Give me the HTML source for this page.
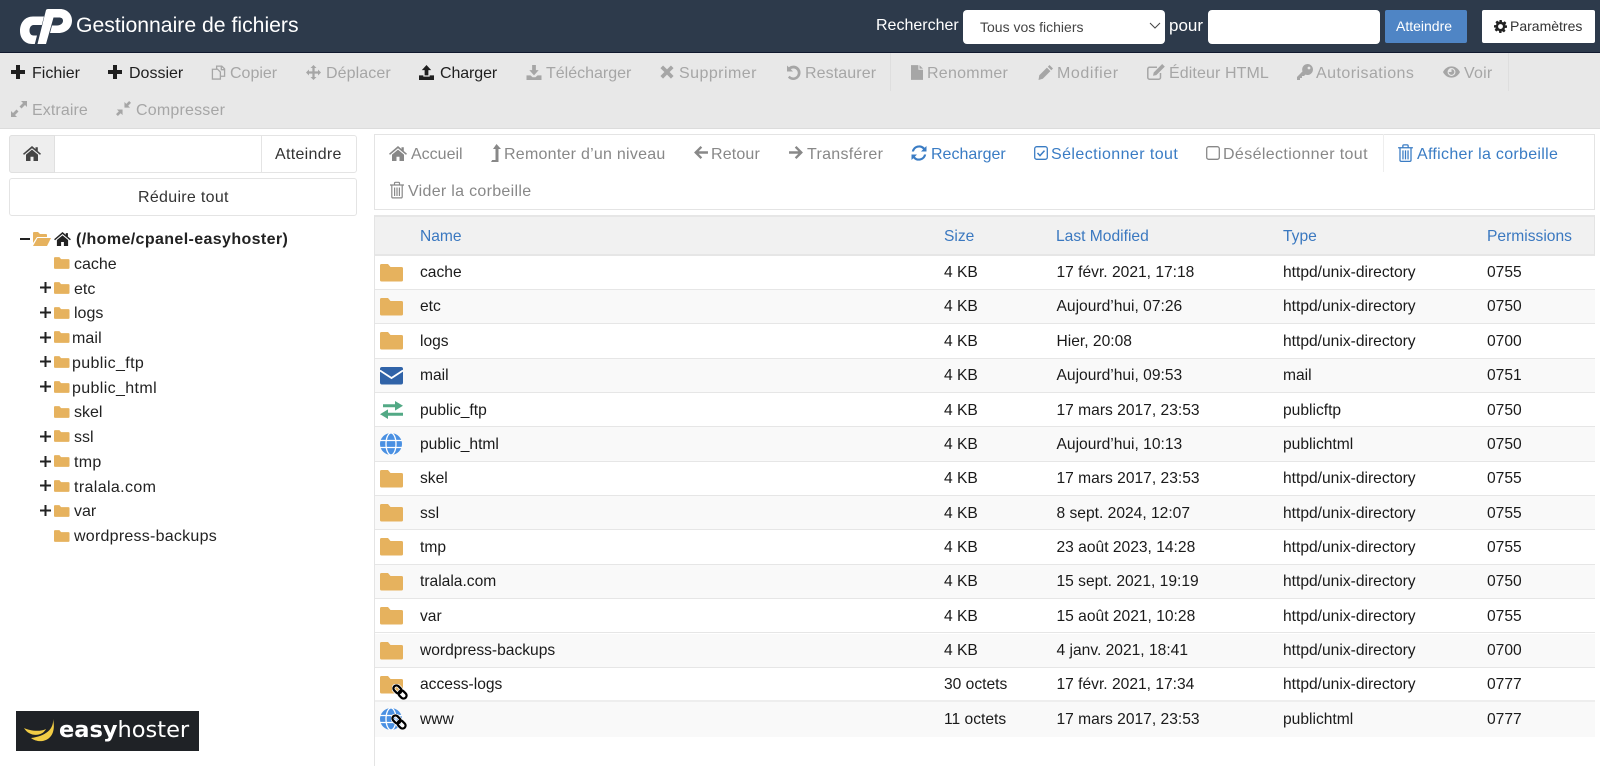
<!DOCTYPE html>
<html lang="fr"><head><meta charset="utf-8"><title>Gestionnaire de fichiers</title>
<style>
html,body{margin:0;padding:0;width:1600px;height:766px;overflow:hidden;background:#fff;font-family:"Liberation Sans",Arial,sans-serif}
.a,.t,.i{position:absolute}
.t{white-space:nowrap;line-height:20px;font-size:16px}
.i{overflow:visible}
.d{color:#a6a6a6}.k{color:#1f1f1f}.g{color:#888}.b{color:#3a7cc4}
.tr{color:#222;font-size:16px}
.f{color:#e6b25e}
.r{position:absolute;left:375px;width:1220px;height:34.4px;box-sizing:border-box;border-bottom:1px solid #e6e6e6;font-size:15.6px;color:#1a1a1a}
.r.e{background:#f9f9f9}
.r span{position:absolute;top:7.6px;line-height:20px;white-space:nowrap}
.r svg{position:absolute;overflow:visible}
.n{left:45px}.s{left:569px}.m{left:681.500px}.y{left:908px}.p{left:1112px}
.h{position:absolute;top:227px;line-height:20px;font-size:15.6px;color:#3a78c0}
</style></head><body>
<svg width="0" height="0" style="position:absolute">
<defs>
<symbol id="plus" viewBox="0 0 16 16"><path d="M6 1h4v5h5v4h-5v5H6v-5H1V6h5z"/></symbol>
<symbol id="copy" viewBox="0 0 16 16"><path fill="none" stroke="currentColor" stroke-width="1.4" d="M6 4V1.200h5.500l3 3V12H10.500M1.500 4.500h5.500l3 3V15H1.500zM11 1.500V5h3.500"/></symbol>
<symbol id="move" viewBox="0 0 16 16"><path d="M8 0l3.200 3.200h-2V6.800h3.600v-2L16 8l-3.200 3.200v-2H9.200v3.600h2L8 16l-3.200-3.200h2V9.200H3.200v2L0 8l3.200-3.200v2h3.600V3.200h-2z"/></symbol>
<symbol id="up" viewBox="0 0 16 16"><path d="M8 0l5 5.500H10V11H6V5.500H3zM0 11h4.600v1.400h6.800V11H16v5H0z"/></symbol>
<symbol id="down" viewBox="0 0 16 16"><path d="M6 0h4v5.500h3L8 11 3 5.500h3zM0 11h4.200L6.500 13h3L11.800 11H16v5H0z"/></symbol>
<symbol id="x" viewBox="0 0 16 16"><path d="M3.500.5L8 5l4.500-4.500 3 3L11 8l4.500 4.500-3 3L8 11l-4.500 4.500-3-3L5 8 .5 3.500z"/></symbol>
<symbol id="undo" viewBox="0 0 16 16"><path d="M2 1.500V7.500H8L5.800 5.200A4.500 4.500 0 1 1 4.700 11.700L2.900 13.500A7.200 7.200 0 1 0 3.800 3.200z"/></symbol>
<symbol id="file" viewBox="0 0 13 16"><path d="M0 0h8v5h5v11H0zM9.200 0L13 3.800H9.200z"/></symbol>
<symbol id="pencil" viewBox="0 0 16 16"><path d="M11.500 1l3.500 3.500-1.700 1.700-3.500-3.500zM8.900 3.600l3.500 3.500-7.600 7.600L0.500 16 1.300 11.200z"/></symbol>
<symbol id="edit" viewBox="0 0 18 16"><path fill="none" stroke="currentColor" stroke-width="1.500" d="M13.500 9v4.500a1.700 1.700 0 0 1-1.700 1.700H2.500a1.700 1.700 0 0 1-1.700-1.700V5a1.700 1.700 0 0 1 1.700-1.700H10"/><path d="M15.200 0l2.600 2.600-8.500 8.500-3.300.7.700-3.300z"/></symbol>
<symbol id="key" viewBox="0 0 16 16"><path d="M10.500 0A5.500 5.500 0 1 1 8.400 10.600L7 12H5v2H3v2H0v-3l5.500-5.600A5.500 5.500 0 0 1 10.500 0zm1.500 2.600a1.400 1.400 0 1 0 0 2.800 1.400 1.400 0 0 0 0-2.800z"/></symbol>
<symbol id="eye" viewBox="0 0 18 12"><path fill-rule="evenodd" d="M9 0c4 0 7.300 2.500 9 6-1.700 3.500-5 6-9 6S1.700 9.500 0 6c1.700-3.500 5-6 9-6zM9 1.800A4.200 4.200 0 1 0 9 10.200 4.200 4.200 0 0 0 9 1.800zM9 3a3 3 0 1 1-3 3h3z"/></symbol>
<symbol id="expand" viewBox="0 0 16 16"><path d="M10 0h6v6l-2-2-3.500 3.500-2-2L12 2zM6 16H0v-6l2 2 3.500-3.500 2 2L4 14z"/></symbol>
<symbol id="compress" viewBox="0 0 16 16"><path d="M9 7V1l2 2 3-3 2 2-3 3 2 2zM7 9v6l-2-2-3 3-2-2 3-3-2-2z"/></symbol>
<symbol id="home" viewBox="0 0 18 15"><path d="M9 0l3.500 3V1.200h2.300V5L18 7.800l-1 1.100L9 2.200 1 8.900 0 7.800zM9 3.600l6 5V15h-4.500v-4.300h-3V15H3V8.600z"/></symbol>
<symbol id="lvl" viewBox="0 0 10 18"><path d="M5.500 0L10 5H7.500v13H0l1.200-2h3.300V5H2z"/></symbol>
<symbol id="al" viewBox="0 0 15 14"><path d="M7 0l1.800 1.800L5 5.700h10v2.600H5l3.800 3.900L7 14 0 7z"/></symbol>
<symbol id="ar" viewBox="0 0 15 14"><path d="M8 0L6.200 1.800 10 5.700H0v2.600h10l-3.800 3.900L8 14l7-7z"/></symbol>
<symbol id="ref" viewBox="0 0 16 16"><path d="M15.500 1v5.500H10l2.100-2.100A5.200 5.200 0 0 0 3 6.500H.8A7.500 7.500 0 0 1 13.700 2.800zM.5 15V9.500H6L3.900 11.600A5.200 5.200 0 0 0 13 9.500h2.200A7.500 7.500 0 0 1 2.300 13.200z"/></symbol>
<symbol id="chk" viewBox="0 0 14 14"><rect x=".7" y=".7" width="12.600" height="12.600" rx="2" fill="none" stroke="currentColor" stroke-width="1.300"/><path fill="none" stroke="currentColor" stroke-width="1.500" d="M3.500 7l2.500 2.600 4.500-5"/></symbol>
<symbol id="sq" viewBox="0 0 14 14"><rect x=".7" y=".7" width="12.600" height="12.600" rx="2" fill="none" stroke="currentColor" stroke-width="1.300"/></symbol>
<symbol id="tr" viewBox="0 0 14 17"><path fill="none" stroke="currentColor" stroke-width="1.200" d="M0 3.500h14M4.500 3.500V1.800q0-1 1-1h3q1 0 1 1v1.700M1.800 3.500v11.700q0 1.200 1.200 1.200h8q1.200 0 1.200-1.200V3.500M4.600 6v8.500M7 6v8.500M9.400 6v8.500"/></symbol>
<symbol id="gear" viewBox="0 0 16 16"><path fill-rule="evenodd" d="M6.500 0h3l.4 2.300 1.300.6 2-1.300 2 2-1.300 2 .6 1.300L16 6.500v3l-2.500.4-.6 1.300 1.300 2-2 2-2-1.300-1.300.6L9.500 16h-3l-.4-2.500-1.300-.6-2 1.300-2-2 1.300-2-.6-1.300L0 9.500v-3l2.500-.4.600-1.300-1.300-2 2-2 2 1.300 1.300-.6zM8 5a3 3 0 1 0 0 6 3 3 0 0 0 0-6z"/></symbol>
<symbol id="fold" viewBox="0 0 23 17.500"><path d="M1.500 0H8l2.500 3H21.500Q23 3 23 4.500V16Q23 17.500 21.500 17.500H1.500Q0 17.500 0 16V1.500Q0 0 1.500 0Z"/></symbol>
<symbol id="mail" viewBox="0 0 23 17.500"><rect width="23" height="17.500" rx="2" fill="#3063a8"/><path d="M0 3.500L11.500 11 23 3.500" fill="none" stroke="#fff" stroke-width="1.800"/></symbol>
<symbol id="ftp" viewBox="0 0 23 18"><path fill="#52a985" d="M15 0l8 4.800-8 4.800V6.300H3V3.300H15zM8 8.400v3.300h15v3H8V18L0 13.200z"/></symbol>
<symbol id="globe" viewBox="0 0 22 22"><circle cx="11" cy="11" r="11" fill="#4a90e2"/><g fill="none" stroke="#fff" stroke-width="1.300"><path d="M0 7.500h22M0 14.500h22"/><ellipse cx="11" cy="11" rx="5" ry="11"/></g></symbol>
<symbol id="link" viewBox="0 0 16 16"><g fill="none" transform="rotate(45 8 8)"><rect x="0" y="5" width="8.800" height="6" rx="3" stroke="#fff" stroke-width="3.800"/><rect x="7.200" y="5" width="8.800" height="6" rx="3" stroke="#fff" stroke-width="3.800"/><rect x="0" y="5" width="8.800" height="6" rx="3" stroke="#000" stroke-width="2.300"/><rect x="7.200" y="5" width="8.800" height="6" rx="3" stroke="#000" stroke-width="2.300"/></g></symbol>
</defs></svg>

<!-- header -->
<div class="a" style="left:0;top:0;width:1600px;height:53px;background:#2d3a4b;border-bottom:1px solid #10182e;box-sizing:border-box"></div>
<svg class="i" style="left:0;top:0" width="80" height="52" viewBox="0 0 80 52"><g fill="#fff">
<path d="M20 31C20 22.500 25 16.500 33 16.500H44L41.800 25H33.500C31 25 29.500 27.500 29.500 30.500S31 35.500 33.500 35.500H37L34.800 44H32C25 44 20 38.500 20 31Z"/>
<path d="M37.500 44L46 10Q46.500 9 48 9H60C67 9 72 14 72 20.500C72 28 66 33 58.500 33H50L52 25.500H57C60.500 25.500 63 23.500 63 20.800C63 18.500 61.500 17.500 59 17.500H53.500L46 44Z"/>
</g></svg>
<span class="t" style="left:76px;top:16px;color:#fff;font-size:21.200px">Gestionnaire de fichiers</span>
<span class="t" style="left:876px;top:16px;color:#fff;font-size:16px">Rechercher</span>
<div class="a" style="left:963px;top:10px;width:202px;height:34px;background:#fff;border-radius:4px"></div>
<span class="t" style="left:980px;top:17px;color:#444;font-size:14px">Tous vos fichiers</span>
<svg class="i" style="left:1149px;top:22px" width="12" height="7" viewBox="0 0 12 7"><path d="M1 1l5 5 5-5" fill="none" stroke="#444" stroke-width="1"/></svg>
<span class="t" style="left:1169px;top:16px;color:#fff;font-size:17px">pour</span>
<div class="a" style="left:1208px;top:10px;width:172px;height:34px;background:#fff;border-radius:4px"></div>
<div class="a" style="left:1385px;top:10px;width:82px;height:33px;background:#4f85c5;border-radius:2px"></div>
<span class="t" style="left:1396px;top:16px;color:#fff;font-size:14px">Atteindre</span>
<div class="a" style="left:1482px;top:10px;width:113px;height:33px;background:#fff;border-radius:2px"></div>
<svg class="i k" style="left:1494px;top:20px;width:13px;height:13px;fill:#222"><use href="#gear"/></svg>
<span class="t" style="left:1510px;top:16px;color:#333;font-size:14px">Paramètres</span>

<!-- toolbar -->
<div class="a" style="left:0;top:53px;width:1600px;height:76px;background:#e8e8e8;border-bottom:1px solid #dcdcdc;box-sizing:border-box"></div>
<div class="a" style="left:890px;top:53px;width:1px;height:38px;background:#dedede"></div>
<div class="a" style="left:1508px;top:53px;width:1px;height:38px;background:#dedede"></div>

<svg class="i k" style="left:10px;top:64px;width:16px;height:16px;fill:#1f1f1f"><use href="#plus"/></svg><span class="t k" style="left:32px;top:64px">Fichier</span>
<svg class="i k" style="left:107px;top:64px;width:16px;height:16px;fill:#1f1f1f"><use href="#plus"/></svg><span class="t k" style="left:129px;top:64px">Dossier</span>
<svg class="i d" style="left:211px;top:65px;width:15px;height:15px"><use href="#copy"/></svg><span class="t d" style="left:230px;top:64px">Copier</span>
<svg class="i d" style="left:306px;top:65px;width:15px;height:15px;fill:#a6a6a6"><use href="#move"/></svg><span class="t d" style="left:326px;top:64px;letter-spacing:.1px">Déplacer</span>
<svg class="i k" style="left:419px;top:65px;width:15px;height:15px;fill:#1f1f1f"><use href="#up"/></svg><span class="t k" style="left:440px;top:64px;letter-spacing:-.1px">Charger</span>
<svg class="i d" style="left:526px;top:65px;width:16px;height:15px;fill:#a6a6a6"><use href="#down"/></svg><span class="t d" style="left:546px;top:64px">Télécharger</span>
<svg class="i d" style="left:660px;top:65px;width:14px;height:14px;fill:#a6a6a6"><use href="#x"/></svg><span class="t d" style="left:679px;top:64px;letter-spacing:.45px">Supprimer</span>
<svg class="i d" style="left:785px;top:64px;width:16px;height:16px;fill:#a6a6a6"><use href="#undo"/></svg><span class="t d" style="left:805px;top:64px;letter-spacing:.1px">Restaurer</span>
<svg class="i d" style="left:911px;top:65px;width:12px;height:15px;fill:#a6a6a6"><use href="#file"/></svg><span class="t d" style="left:927px;top:64px;letter-spacing:.25px">Renommer</span>
<svg class="i d" style="left:1038px;top:64px;width:16px;height:16px;fill:#a6a6a6"><use href="#pencil"/></svg><span class="t d" style="left:1057px;top:64px;letter-spacing:.6px">Modifier</span>
<svg class="i d" style="left:1147px;top:64px;width:18px;height:16px;fill:#a6a6a6"><use href="#edit"/></svg><span class="t d" style="left:1169px;top:64px;letter-spacing:.1px">Éditeur HTML</span>
<svg class="i d" style="left:1297px;top:64px;width:16px;height:16px;fill:#a6a6a6"><use href="#key"/></svg><span class="t d" style="left:1316px;top:64px;letter-spacing:.45px">Autorisations</span>
<svg class="i d" style="left:1443px;top:66px;width:17px;height:12px;fill:#a6a6a6"><use href="#eye"/></svg><span class="t d" style="left:1464px;top:64px;letter-spacing:.2px">Voir</span>
<svg class="i d" style="left:11px;top:101px;width:16px;height:16px;fill:#a6a6a6"><use href="#expand"/></svg><span class="t d" style="left:32px;top:101px;letter-spacing:.1px">Extraire</span>
<svg class="i d" style="left:116px;top:101px;width:15px;height:15px;fill:#a6a6a6"><use href="#compress"/></svg><span class="t d" style="left:136px;top:101px;letter-spacing:.2px">Compresser</span>

<!-- left -->
<div class="a" style="left:9px;top:135px;width:348px;height:38px;box-sizing:border-box;border:1px solid #e4e4e4;border-radius:3px"></div>
<div class="a" style="left:9px;top:135px;width:46px;height:38px;box-sizing:border-box;background:#eee;border:1px solid #e0e0e0;border-radius:3px 0 0 3px"></div>
<div class="a" style="left:261px;top:135px;width:1px;height:38px;background:#e4e4e4"></div>
<svg class="i" style="left:23px;top:146px;width:18px;height:15px;fill:#444"><use href="#home"/></svg>
<span class="t" style="left:275px;top:145px;color:#333;font-size:16px;letter-spacing:.3px">Atteindre</span>
<div class="a" style="left:9px;top:178px;width:348px;height:38px;box-sizing:border-box;border:1px solid #e4e4e4;border-radius:3px"></div>
<span class="t" style="left:138px;top:188px;color:#333;font-size:16px;letter-spacing:.3px">Réduire tout</span>

<div class="a" style="left:20px;top:238px;width:10px;height:2px;background:#222"></div>
<svg class="i" style="left:33px;top:232px" width="18" height="14" viewBox="0 0 18 14"><path fill="#e6b25e" d="M0 1q0-1 1-1h4l2 2h6q1 0 1 1v2H4L0 11zM4.500 6H18l-4 8H0z"/></svg>
<svg class="i" style="left:54px;top:232px;width:17px;height:14px;fill:#222"><use href="#home"/></svg>
<span class="t tr" style="left:76px;top:230px;font-weight:bold;letter-spacing:.38px">(/home/cpanel-easyhoster)</span>

<svg class="i f" style="left:54px;top:257px;width:15.500px;height:12px;fill:#e6b25e"><use href="#fold"/></svg><span class="t tr" style="left:74px;top:255px">cache</span>
<svg class="i" style="left:40px;top:282px;width:11px;height:11px"><path d="M4.500 0h2v4.500H11v2H6.500V11h-2V6.500H0v-2h4.500z" fill="#222"/></svg><svg class="i" style="left:54px;top:282px;width:15.500px;height:12px;fill:#e6b25e"><use href="#fold"/></svg><span class="t tr" style="left:74px;top:280px">etc</span>
<svg class="i" style="left:40px;top:307px;width:11px;height:11px"><path d="M4.500 0h2v4.500H11v2H6.500V11h-2V6.500H0v-2h4.500z" fill="#222"/></svg><svg class="i" style="left:54px;top:307px;width:15.500px;height:12px;fill:#e6b25e"><use href="#fold"/></svg><span class="t tr" style="left:74px;top:304px">logs</span>
<svg class="i" style="left:40px;top:332px;width:11px;height:11px"><path d="M4.500 0h2v4.500H11v2H6.500V11h-2V6.500H0v-2h4.500z" fill="#222"/></svg><svg class="i" style="left:54px;top:331px;width:15.500px;height:12px;fill:#e6b25e"><use href="#fold"/></svg><span class="t tr" style="left:72px;top:329px;letter-spacing:.1px">mail</span>
<svg class="i" style="left:40px;top:356px;width:11px;height:11px"><path d="M4.500 0h2v4.500H11v2H6.500V11h-2V6.500H0v-2h4.500z" fill="#222"/></svg><svg class="i" style="left:54px;top:356px;width:15.500px;height:12px;fill:#e6b25e"><use href="#fold"/></svg><span class="t tr" style="left:72px;top:354px;letter-spacing:.37px">public_ftp</span>
<svg class="i" style="left:40px;top:381px;width:11px;height:11px"><path d="M4.500 0h2v4.500H11v2H6.500V11h-2V6.500H0v-2h4.500z" fill="#222"/></svg><svg class="i" style="left:54px;top:381px;width:15.500px;height:12px;fill:#e6b25e"><use href="#fold"/></svg><span class="t tr" style="left:72px;top:379px;letter-spacing:.37px">public_html</span>
<svg class="i" style="left:54px;top:406px;width:15.500px;height:12px;fill:#e6b25e"><use href="#fold"/></svg><span class="t tr" style="left:74px;top:403px">skel</span>
<svg class="i" style="left:40px;top:431px;width:11px;height:11px"><path d="M4.500 0h2v4.500H11v2H6.500V11h-2V6.500H0v-2h4.500z" fill="#222"/></svg><svg class="i" style="left:54px;top:430px;width:15.500px;height:12px;fill:#e6b25e"><use href="#fold"/></svg><span class="t tr" style="left:74px;top:428px">ssl</span>
<svg class="i" style="left:40px;top:456px;width:11px;height:11px"><path d="M4.500 0h2v4.500H11v2H6.500V11h-2V6.500H0v-2h4.500z" fill="#222"/></svg><svg class="i" style="left:54px;top:455px;width:15.500px;height:12px;fill:#e6b25e"><use href="#fold"/></svg><span class="t tr" style="left:74px;top:453px;letter-spacing:.3px">tmp</span>
<svg class="i" style="left:40px;top:480px;width:11px;height:11px"><path d="M4.500 0h2v4.500H11v2H6.500V11h-2V6.500H0v-2h4.500z" fill="#222"/></svg><svg class="i" style="left:54px;top:480px;width:15.500px;height:12px;fill:#e6b25e"><use href="#fold"/></svg><span class="t tr" style="left:74px;top:478px;letter-spacing:.37px">tralala.com</span>
<svg class="i" style="left:40px;top:505px;width:11px;height:11px"><path d="M4.500 0h2v4.500H11v2H6.500V11h-2V6.500H0v-2h4.500z" fill="#222"/></svg><svg class="i" style="left:54px;top:505px;width:15.500px;height:12px;fill:#e6b25e"><use href="#fold"/></svg><span class="t tr" style="left:74px;top:502px">var</span>
<svg class="i" style="left:54px;top:530px;width:15.500px;height:12px;fill:#e6b25e"><use href="#fold"/></svg><span class="t tr" style="left:74px;top:527px;letter-spacing:.25px">wordpress-backups</span>

<!-- logo -->
<div class="a" style="left:16px;top:711px;width:183px;height:40px;background:#1f2226"></div>
<svg class="i" style="left:16px;top:711px" width="183" height="40" viewBox="0 0 183 40"><g fill="#f2cd45"><path d="M8 17C14 20 24 21 30 18C26 26 13 26 8 17Z"/><path d="M37 8C38 18 30 25 15 27C24 34 42 30 37 8Z"/></g></svg>
<span class="t" style="left:59px;top:710px;color:#fff;font-family:'DejaVu Sans',sans-serif;font-size:22.500px;line-height:40px"><b>easy</b>hoster</span>

<!-- right toolbar -->
<div class="a" style="left:374px;top:134px;width:1221px;height:76px;box-sizing:border-box;border:1px solid #e4e4e4"></div>
<div class="a" style="left:1383px;top:134px;width:1px;height:38px;background:#eee"></div>
<svg class="i" style="left:389px;top:146px;width:18px;height:15px;fill:#888"><use href="#home"/></svg><span class="t g" style="left:411px;top:145px">Accueil</span>
<svg class="i" style="left:491px;top:144px;width:10px;height:18px;fill:#888"><use href="#lvl"/></svg><span class="t g" style="left:504px;top:145px;letter-spacing:.25px">Remonter d’un niveau</span>
<svg class="i" style="left:694px;top:146px;width:14px;height:13px;fill:#888"><use href="#al"/></svg><span class="t g" style="left:711px;top:145px;letter-spacing:.15px">Retour</span>
<svg class="i" style="left:789px;top:146px;width:14px;height:13px;fill:#888"><use href="#ar"/></svg><span class="t g" style="left:807px;top:145px;letter-spacing:.3px">Transférer</span>
<svg class="i" style="left:911px;top:145px;width:16px;height:16px;fill:#3a7cc4"><use href="#ref"/></svg><span class="t b" style="left:931px;top:145px">Recharger</span>
<svg class="i b" style="left:1034px;top:146px;width:14px;height:14px"><use href="#chk"/></svg><span class="t b" style="left:1051px;top:145px;letter-spacing:.42px">Sélectionner tout</span>
<svg class="i g" style="left:1206px;top:146px;width:14px;height:14px"><use href="#sq"/></svg><span class="t g" style="left:1223px;top:145px;letter-spacing:.37px">Désélectionner tout</span>
<svg class="i b" style="left:1398px;top:144px;width:15px;height:18px"><use href="#tr"/></svg><span class="t b" style="left:1417px;top:145px;letter-spacing:.3px">Afficher la corbeille</span>
<svg class="i g" style="left:390px;top:181px;width:14px;height:18px"><use href="#tr"/></svg><span class="t g" style="left:408px;top:182px;letter-spacing:.3px">Vider la corbeille</span>

<!-- table -->
<div class="a" style="left:374px;top:215px;width:1px;height:551px;background:#e4e4e4"></div>
<div class="a" style="left:374px;top:215px;width:1221px;height:41px;box-sizing:border-box;background:#f1f1f1;border-top:2px solid #e6e6e6;border-bottom:2px solid #e6e6e6;border-left:1px solid #e4e4e4;border-right:1px solid #e4e4e4"></div>
<span class="h" style="left:420px">Name</span><span class="h" style="left:944px">Size</span><span class="h" style="left:1056px">Last Modified</span><span class="h" style="left:1283px">Type</span><span class="h" style="left:1487px">Permissions</span>

<div class="r" style="top:255.500px"><svg style="left:5px;top:8px;width:23px;height:17.500px;fill:#e6b25e"><use href="#fold"/></svg><span class="n">cache</span><span class="s">4 KB</span><span class="m">17 févr. 2021, 17:18</span><span class="y">httpd/unix-directory</span><span class="p">0755</span></div>
<div class="r e" style="top:289.900px"><svg style="left:5px;top:8px;width:23px;height:17.500px;fill:#e6b25e"><use href="#fold"/></svg><span class="n">etc</span><span class="s">4 KB</span><span class="m">Aujourd’hui, 07:26</span><span class="y">httpd/unix-directory</span><span class="p">0750</span></div>
<div class="r" style="top:324.200px"><svg style="left:5px;top:8px;width:23px;height:17.500px;fill:#e6b25e"><use href="#fold"/></svg><span class="n">logs</span><span class="s">4 KB</span><span class="m">Hier, 20:08</span><span class="y">httpd/unix-directory</span><span class="p">0700</span></div>
<div class="r e" style="top:358.600px"><svg style="left:5px;top:8.500px;width:23px;height:17.500px"><use href="#mail"/></svg><span class="n">mail</span><span class="s">4 KB</span><span class="m">Aujourd’hui, 09:53</span><span class="y">mail</span><span class="p">0751</span></div>
<div class="r" style="top:393px"><svg style="left:5px;top:8px;width:23px;height:18px"><use href="#ftp"/></svg><span class="n">public_ftp</span><span class="s">4 KB</span><span class="m">17 mars 2017, 23:53</span><span class="y">publicftp</span><span class="p">0750</span></div>
<div class="r e" style="top:427.300px"><svg style="left:5px;top:6px;width:22px;height:22px"><use href="#globe"/></svg><span class="n">public_html</span><span class="s">4 KB</span><span class="m">Aujourd’hui, 10:13</span><span class="y">publichtml</span><span class="p">0750</span></div>
<div class="r" style="top:461.700px"><svg style="left:5px;top:8px;width:23px;height:17.500px;fill:#e6b25e"><use href="#fold"/></svg><span class="n">skel</span><span class="s">4 KB</span><span class="m">17 mars 2017, 23:53</span><span class="y">httpd/unix-directory</span><span class="p">0755</span></div>
<div class="r e" style="top:496px"><svg style="left:5px;top:8px;width:23px;height:17.500px;fill:#e6b25e"><use href="#fold"/></svg><span class="n">ssl</span><span class="s">4 KB</span><span class="m">8 sept. 2024, 12:07</span><span class="y">httpd/unix-directory</span><span class="p">0755</span></div>
<div class="r" style="top:530.400px"><svg style="left:5px;top:8px;width:23px;height:17.500px;fill:#e6b25e"><use href="#fold"/></svg><span class="n">tmp</span><span class="s">4 KB</span><span class="m">23 août 2023, 14:28</span><span class="y">httpd/unix-directory</span><span class="p">0755</span></div>
<div class="r e" style="top:564.800px"><svg style="left:5px;top:8px;width:23px;height:17.500px;fill:#e6b25e"><use href="#fold"/></svg><span class="n">tralala.com</span><span class="s">4 KB</span><span class="m">15 sept. 2021, 19:19</span><span class="y">httpd/unix-directory</span><span class="p">0750</span></div>
<div class="r" style="top:599.100px"><svg style="left:5px;top:8px;width:23px;height:17.500px;fill:#e6b25e"><use href="#fold"/></svg><span class="n">var</span><span class="s">4 KB</span><span class="m">15 août 2021, 10:28</span><span class="y">httpd/unix-directory</span><span class="p">0755</span></div>
<div class="r e" style="top:633.500px"><svg style="left:5px;top:8px;width:23px;height:17.500px;fill:#e6b25e"><use href="#fold"/></svg><span class="n">wordpress-backups</span><span class="s">4 KB</span><span class="m">4 janv. 2021, 18:41</span><span class="y">httpd/unix-directory</span><span class="p">0700</span></div>
<div class="r" style="top:667.800px;border-bottom:2px solid #eee"><svg style="left:5px;top:8px;width:23px;height:17.500px;fill:#e6b25e"><use href="#fold"/></svg><svg style="left:17px;top:16px;width:16px;height:16px"><use href="#link"/></svg><span class="n">access-logs</span><span class="s">30 octets</span><span class="m">17 févr. 2021, 17:34</span><span class="y">httpd/unix-directory</span><span class="p">0777</span></div>
<div class="r e" style="top:702.200px;border:0"><svg style="left:5px;top:6px;width:22px;height:22px"><use href="#globe"/></svg><svg style="left:16px;top:12px;width:16px;height:16px"><use href="#link"/></svg><span class="n">www</span><span class="s">11 octets</span><span class="m">17 mars 2017, 23:53</span><span class="y">publichtml</span><span class="p">0777</span></div>
</body></html>
